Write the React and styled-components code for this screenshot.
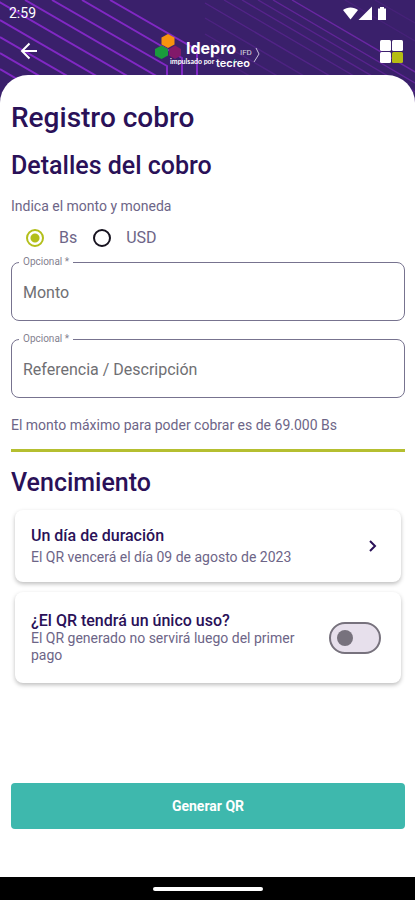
import React, { useState } from "react"
import styled, { createGlobalStyle } from "styled-components"

const GlobalStyle = createGlobalStyle`
    *, *::before, *::after {
        box-sizing: border-box;
    }

    body {
        margin: 0;
        background-color: #3a206b;
        font-family: Roboto, "Liberation Sans", sans-serif;
    }

    button, input {
        font-family: inherit;
    }
`;

const Screen = styled.div`
    position: relative;
    display: flex;
    flex-direction: column;
    min-height: 100vh;
`;

const Pattern = styled.svg`
    position: absolute;
    top: 0;
    left: 0;
    width: 100%;
    height: 104px;
    z-index: -1;
`;

const StatusBar = styled.div`
    display: flex;
    justify-content: space-between;
    align-items: center;
    height: 26px;
    padding: 0 26px 0 9px;
    color: #fff;
    font-size: 14px;
`;

const Header = styled.header`
    display: grid;
    grid-template-columns: 40px 1fr 40px;
    align-items: center;
    height: 49px;
    padding: 0 4px 0 9px;
`;

const IconButton = styled.button`
    display: flex;
    justify-content: center;
    align-items: center;
    height: 40px;
    padding: 0;
    border: none;
    background: none;
    color: #fff;
    cursor: pointer;
`;

const Logo = styled.svg`
    display: block;
    justify-self: center;
`;

const Sheet = styled.main`
    flex: 1;
    display: flex;
    flex-direction: column;
    padding: 25px 10px 48px 11px;
    border-radius: 28px 28px 0 0;
    background-color: #fff;
`;

const Title = styled.h1`
    margin: 0 0 12px;
    color: #2a1158;
    font-size: 28px;
    font-weight: 500;
    line-height: 36px;
`;

const Subtitle = styled.h2`
    margin: 0 0 ${({ $tight }) => ($tight ? "9px" : "12px")};
    color: #2a1158;
    font-size: 25px;
    font-weight: 500;
    line-height: 36px;
`;

const Note = styled.p`
    margin: 0;
    color: #6d6587;
    font-size: 14px;
    line-height: 20px;
`;

const CurrencyGroup = styled.div`
    display: flex;
    gap: 16px;
    margin: 12px 0 8px 15px;
`;

const RadioLabel = styled.label`
    display: flex;
    align-items: center;
    gap: 15px;
    color: #6d6587;
    font-size: 16px;
    line-height: 20px;
`;

const Radio = styled.input`
    appearance: none;
    width: 18px;
    height: 18px;
    margin: 0;
    border: 2px solid #17131f;
    border-radius: 50%;

    &:checked {
        border-color: #b3bf1b;
        background: radial-gradient(circle, #b3bf1b 0 4px, transparent 5px);
    }
`;

const FieldList = styled.div`
    display: flex;
    flex-direction: column;
    gap: 12px;
    margin-bottom: 17px;
`;

const FieldBox = styled.fieldset`
    min-width: 0;
    margin: 0;
    padding: 0;
    border: 1px solid #77738f;
    border-radius: 8px;

    legend {
        margin-left: 7px;
        padding: 0 4px;
        color: #85818f;
        font-size: 10px;
        line-height: 12px;
    }
`;

const FieldInput = styled.input`
    display: block;
    width: 100%;
    height: 52px;
    padding: 0 11px 4px;
    border: none;
    outline: none;
    background: none;
    color: #2a1158;
    font-size: 16px;

    &::placeholder {
        color: #6f6f73;
        opacity: 1;
    }
`;

const Divider = styled.hr`
    width: 100%;
    height: 3px;
    margin: 14px 0 13px;
    border: none;
    background-color: #b5bf30;
`;

const CardList = styled.div`
    display: flex;
    flex-direction: column;
    gap: 10px;
    margin: 0 4px;
`;

const Card = styled.div`
    display: flex;
    align-items: center;
    justify-content: space-between;
    gap: 16px;
    min-height: ${({ $tall }) => ($tall ? "91px" : "72px")};
    padding: 0 20px 0 16px;
    border: none;
    border-radius: 8px;
    background-color: #fff;
    box-shadow: 0 2px 4px rgba(0, 0, 0, 0.26);
    text-align: left;
`;

const CardText = styled.span`
    display: flex;
    flex-direction: column;
    gap: ${({ $gap }) => $gap || "0"};
`;

const CardTitle = styled.span`
    color: #2a1158;
    font-size: 16px;
    font-weight: 500;
    line-height: 18px;
`;

const CardNote = styled.span`
    color: #6d6587;
    font-size: 14px;
    line-height: 17px;
`;

const Switch = styled.input`
    appearance: none;
    flex: none;
    display: flex;
    align-items: center;
    width: 52px;
    height: 32px;
    margin: 0;
    padding: 0 6px;
    border: 2px solid #77727d;
    border-radius: 16px;
    background-color: #e7e0ec;

    &::before {
        content: "";
        width: 16px;
        height: 16px;
        border-radius: 50%;
        background-color: #77727d;
    }

    &:checked {
        justify-content: flex-end;
        background-color: #b3bf1b;
    }
`;

const SubmitButton = styled.button`
    height: 46px;
    margin-top: auto;
    border: none;
    border-radius: 4px;
    background-color: #3eb8ad;
    color: #fff;
    font-size: 14px;
    font-weight: 700;
    cursor: pointer;
`;

const NavBar = styled.div`
    display: flex;
    justify-content: center;
    align-items: center;
    height: 23px;
    background-color: #000;

    span {
        width: 110px;
        height: 4px;
        border-radius: 2px;
        background-color: #fff;
    }
`;

const HeaderPattern = () => (
    <Pattern viewBox="0 0 415 104" preserveAspectRatio="xMinYMin slice" aria-hidden="true">
        <rect width="2000" height="104" fill="#3a206b" />
        <g fill="none" stroke="#8128c4" strokeWidth="2">
            <path d="M110 0L197 50V104" />
            <path d="M82 0L182 58V104" />
            <path d="M52 0L167 66V104" />
            <path d="M25 0L205 104" />
            <path d="M-4 0L176 104" />
            <path d="M0 20L145 104" />
            <path d="M0 37L116 104" />
            <path d="M0 53L88 104" />
            <path d="M0 69L60 104" />
        </g>
        <g fill="none" stroke="#6a27a3" strokeWidth="1.4">
            <path d="M292 0L470 104" />
            <path d="M273 0L451 104" opacity="0.8" />
            <path d="M258 0L436 104" opacity="0.6" />
            <path d="M242 0L420 104" opacity="0.6" />
            <path d="M224 0L402 104" opacity="0.5" />
            <path d="M205 3L378 104" opacity="0.5" />
            <path d="M205 18L352 104" opacity="0.4" />
            <path d="M205 34L326 104" opacity="0.4" />
            <path d="M205 50L298 104" opacity="0.3" />
            <path d="M375 0L415 23" opacity="0.25" />
            <path d="M345 0L415 41" opacity="0.25" />
        </g>
    </Pattern>
)

const StatusIcons = () => (
    <svg width="46" height="15" viewBox="0 0 46 15" fill="#fff" aria-hidden="true">
        <path d="M0 4C4 .5 11 .5 15 4L7.500 13.500Z" />
        <path d="M29 .5V14H15.500Z" />
        <path d="M37 1h4v1.500h2V14h-8V2.500h2Z" />
    </svg>
)

const IdeproLogo = () => (
    <Logo width="114" height="36" viewBox="0 0 114 36" role="img" aria-label="Idepro IFD, impulsado por tecreo">
        <path d="M15 1l6.500 3.500v7L15 15l-6.500-3.500v-7Z" fill="#f7930e" />
        <path d="M8.500 12.500l6.500 3.500v6.500l-6.500 3.500-6.500-3.500V16Z" fill="#1a9a3c" />
        <path d="M22 12.500l6 3.500v6.500l-6 3.500-6-3.500V16Z" fill="#82196a" />
        <g fill="#fff">
            <text x="33" y="21" fontSize="16" fontWeight="700" fontFamily="Inter, sans-serif">Idepro</text>
            <text x="87" y="22" fontSize="8" opacity="0.8">IFD</text>
            <text x="17" y="31" fontSize="7" fontWeight="700" fontFamily="Lato, sans-serif">impulsado por</text>
            <text x="63" y="34" fontSize="11" fontWeight="600" fontFamily="Inter, sans-serif">tecreo</text>
        </g>
        <path d="M82 26l-2 4" stroke="#3eb8ad" />
        <path d="M103 15l3 6-5 8" fill="none" stroke="#c9bfdc" />
    </Logo>
)

const Field = ({ id, placeholder }) => (
    <FieldBox>
        <legend><label htmlFor={id}>Opcional *</label></legend>
        <FieldInput id={id} type="text" placeholder={placeholder} />
    </FieldBox>
)

const CurrencyOption = ({ value, currency, onSelect }) => (
    <RadioLabel>
        <Radio type="radio" name="currency" value={value} checked={currency === value} onChange={() => onSelect(value)} />
        {value}
    </RadioLabel>
)

export default function App() {
    const [currency, setCurrency] = useState("Bs")
    const [singleUse, setSingleUse] = useState(false)

    return (
        <>
            <GlobalStyle />
            <Screen>
                <HeaderPattern />
                <StatusBar>
                    <span>2:59</span>
                    <StatusIcons />
                </StatusBar>
                <Header>
                    <IconButton type="button" aria-label="Volver">
                        <svg width="18" height="18" viewBox="0 0 18 18" fill="none" stroke="currentColor" strokeWidth="2">
                            <path d="M17 9H2M9.500 1.500L2 9l7.500 7.500" />
                        </svg>
                    </IconButton>
                    <IdeproLogo />
                    <IconButton type="button" aria-label="Menú">
                        <svg width="24" height="24" viewBox="0 0 24 24" fill="#fff">
                            <rect x="1" y="1" width="11" height="11" rx="1.500" />
                            <rect x="13" y="1" width="11" height="11" rx="1.500" />
                            <rect x="1" y="13" width="11" height="11" rx="1.500" />
                            <rect x="13" y="13" width="11" height="11" rx="1.500" fill="#b5bd13" />
                        </svg>
                    </IconButton>
                </Header>
                <Sheet>
                    <Title>Registro cobro</Title>
                    <Subtitle>Detalles del cobro</Subtitle>
                    <Note id="currency-note">Indica el monto y moneda</Note>
                    <CurrencyGroup role="radiogroup" aria-labelledby="currency-note">
                        <CurrencyOption value="Bs" currency={currency} onSelect={setCurrency} />
                        <CurrencyOption value="USD" currency={currency} onSelect={setCurrency} />
                    </CurrencyGroup>
                    <FieldList>
                        <Field id="amount" placeholder="Monto" />
                        <Field id="reference" placeholder="Referencia / Descripción" />
                    </FieldList>
                    <Note>El monto máximo para poder cobrar es de 69.000 Bs</Note>
                    <Divider />
                    <Subtitle $tight>Vencimiento</Subtitle>
                    <CardList>
                        <Card as="button" type="button">
                            <CardText $gap="4px">
                                <CardTitle>Un día de duración</CardTitle>
                                <CardNote>El QR vencerá el día 09 de agosto de 2023</CardNote>
                            </CardText>
                            <svg width="16" height="16" viewBox="0 0 16 16" fill="none" stroke="#2a1158" strokeWidth="2" aria-hidden="true">
                                <path d="M5 3l5 5-5 5" />
                            </svg>
                        </Card>
                        <Card as="label" $tall>
                            <CardText>
                                <CardTitle>¿El QR tendrá un único uso?</CardTitle>
                                <CardNote>El QR generado no servirá luego del primer pago</CardNote>
                            </CardText>
                            <Switch type="checkbox" role="switch" checked={singleUse} onChange={() => setSingleUse(!singleUse)} />
                        </Card>
                    </CardList>
                    <SubmitButton type="button">Generar QR</SubmitButton>
                </Sheet>
                <NavBar><span /></NavBar>
            </Screen>
        </>
    )
}
